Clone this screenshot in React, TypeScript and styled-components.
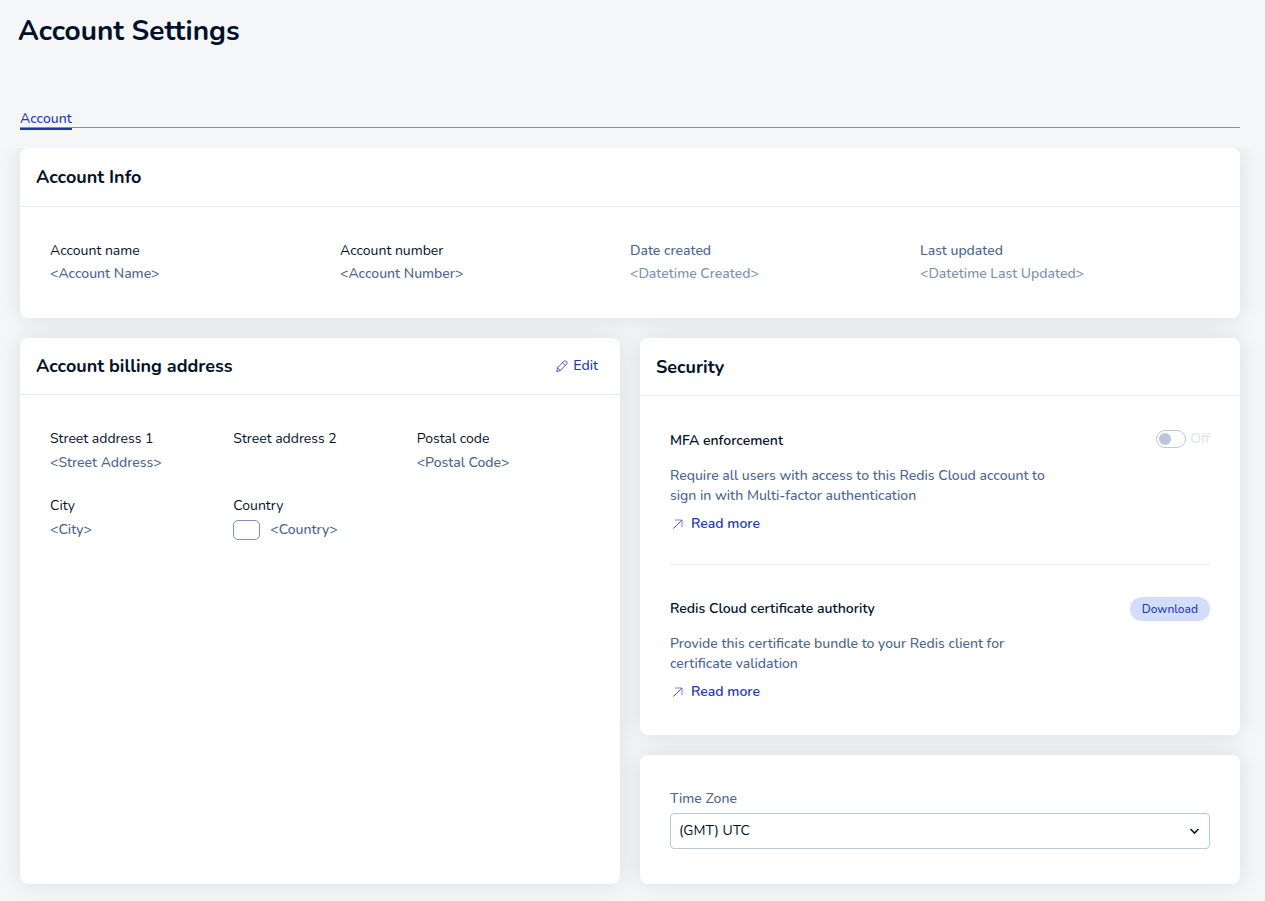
import React from 'react';
import styled, { createGlobalStyle } from 'styled-components';

const color = {
  page: '#f4f6f8',
  ink: '#091a33',
  title: '#01112a',
  slate: '#4a6590',
  faded: '#7b90b0',
  link: '#1e39b0',
  border: '#bbc6d8',
  line: '#e8ebf1',
};

const GlobalStyle = createGlobalStyle`
  *, *::before, *::after { box-sizing: border-box; }
  body {
    margin: 0;
    background: ${color.page};
    color: ${color.title};
    font: 400 14px/20px Nunito, 'Nunito Sans', Lato, 'Open Sans', sans-serif;
  }
  h1, h2, h3, p, dl, dd { margin: 0; }
  button, select, input { font: inherit; }
`;

const PageHeader = styled.header`
  padding: 10px 18px 57px;
`;

const PageTitle = styled.h1`
  font-size: 28px;
  line-height: 42px;
  font-weight: 700;
`;

const Tabs = styled.nav`
  display: flex;
  height: 19px;
  margin: 0 25px 0 20px;
  border-bottom: 1px solid ${color.faded};
`;

const Tab = styled.a`
  height: 21px;
  border-bottom: 2px solid ${color.link};
  color: ${color.link};
  font-weight: 500;
  text-decoration: none;
`;

const Content = styled.main`
  display: grid;
  gap: 20px;
  margin-top: 20px;
  padding: 0 25px 17px 20px;
  overflow: hidden;
`;

const Columns = styled.div`
  display: grid;
  grid-template-columns: repeat(2, minmax(0, 1fr));
  gap: 20px;
`;

const Stack = styled.div`
  display: flex;
  flex-direction: column;
  gap: 20px;
`;

const Card = styled.section`
  border-radius: 8px;
  background: #fff;
  box-shadow: 0 0 24px rgba(0, 0, 0, 0.1);
`;

const CardHeader = styled.div<{ $height: number }>`
  display: flex;
  align-items: center;
  justify-content: space-between;
  height: ${(p) => p.$height}px;
  padding: 0 22px 0 16px;
  border-bottom: 1px solid ${color.line};
`;

const CardTitle = styled.h2`
  font-size: 18px;
  line-height: 24px;
  font-weight: 700;
`;

const EditButton = styled.button`
  display: flex;
  align-items: center;
  gap: 5px;
  padding: 0;
  border: 0;
  background: none;
  color: ${color.link};
  font-weight: 500;
`;

const Fields = styled.dl<{ $columns: number; $gap: number }>`
  display: grid;
  grid-template-columns: repeat(${(p) => p.$columns}, minmax(0, 1fr));
  gap: 23px ${(p) => p.$gap}px;
  padding: 34px 30px;
`;

const Field = styled.div<{ $gap: number }>`
  display: grid;
  gap: ${(p) => p.$gap}px;
  align-content: start;
`;

const Label = styled.dt<{ $muted?: boolean }>`
  color: ${(p) => (p.$muted ? color.slate : color.title)};
  font-weight: ${(p) => (p.$muted ? 500 : 400)};
`;

const Value = styled.dd<{ $muted?: boolean }>`
  display: flex;
  align-items: center;
  gap: 10px;
  color: ${(p) => (p.$muted ? color.faded : color.slate)};
  font-weight: 500;
`;

const Flag = styled.span`
  width: 27px;
  height: 20px;
  border: 1px solid ${color.faded};
  border-radius: 5px;
`;

const SecurityBody = styled.div`
  padding: 0 30px;
`;

const Setting = styled.section`
  padding: 33px 0 30px;

  & + & {
    border-top: 1px solid ${color.line};
    padding: 32px 0 33px;
  }
`;

const SettingHead = styled.div`
  display: flex;
  align-items: center;
  justify-content: space-between;
  height: 24px;
  margin-bottom: 13px;
`;

const SettingTitle = styled.h3`
  font-size: 14px;
  line-height: 20px;
  font-weight: 600;
`;

const SettingText = styled.p`
  max-width: 380px;
  color: ${color.slate};
  font-weight: 500;
`;

const ReadMore = styled.a`
  display: flex;
  align-items: center;
  width: max-content;
  gap: 8px;
  margin-top: 8px;
  padding-left: 3px;
  color: ${color.link};
  font-weight: 600;
  text-decoration: none;
`;

const Toggle = styled.label`
  display: flex;
  align-items: center;
  gap: 4px;
  padding-bottom: 4px;
  color: #dde3ec;
`;

const Switch = styled.input`
  appearance: none;
  display: flex;
  align-items: center;
  width: 30px;
  height: 18px;
  margin: 0;
  padding: 0 2px;
  border: 1px solid ${color.border};
  border-radius: 9px;
  background: #fff;

  &::before {
    content: '';
    width: 12px;
    height: 12px;
    border-radius: 50%;
    background: ${color.border};
  }

  &:checked {
    justify-content: flex-end;
  }
`;

const DownloadButton = styled.button`
  height: 24px;
  padding: 0 12px;
  border: 0;
  border-radius: 12px;
  background: #d2ddfc;
  color: ${color.link};
  font-size: 12px;
  line-height: 24px;
  font-weight: 500;
`;

const TimeZoneField = styled.div`
  display: grid;
  gap: 4px;
  padding: 34px 30px 35px;
`;

const TimeZoneLabel = styled.label`
  color: ${color.slate};
  font-weight: 500;
`;

const SelectBox = styled.div`
  display: grid;
  align-items: center;

  & > * { grid-area: 1 / 1; }
  & > svg {
    justify-self: end;
    margin-right: 10px;
    pointer-events: none;
  }
`;

const Select = styled.select`
  appearance: none;
  width: 100%;
  height: 36px;
  padding: 0 30px 0 8px;
  border: 1px solid ${color.border};
  border-radius: 4px;
  background: #fff;
  color: ${color.title};
`;

const PencilIcon = () => (
  <svg width="12" height="12" viewBox="0 0 12 12" fill="none" stroke="currentColor" strokeWidth="0.8" strokeLinejoin="round" strokeLinecap="round" aria-hidden="true">
    <path d="M0.8 11.2 L1.5 7.9 L7.7 1.4 Q8.9 0.2 10.3 1.4 Q11.8 2.8 10.6 4.2 L4.2 10.4 Z" />
    <path d="M6.5 2.7 L9.3 5.5 M1.5 7.9 L4.2 10.4" />
  </svg>
);

const ArrowIcon = () => (
  <svg width="10" height="10" viewBox="0 0 10 10" fill="none" stroke="currentColor" aria-hidden="true">
    <path d="M0.5 9.5 L9 1" strokeWidth="0.8" />
    <path d="M2 1 H9 V8" strokeWidth="1" strokeOpacity="0.6" />
  </svg>
);

const ChevronIcon = () => (
  <svg width="11" height="8" viewBox="0 0 11 8" fill="none" stroke={color.ink} strokeWidth="1.6" aria-hidden="true">
    <path d="M1.5 2 L5.5 6 L9.5 2" />
  </svg>
);

type FieldData = { label: string; value?: string; muted?: boolean; flag?: boolean };

const accountFields: FieldData[] = [
  { label: 'Account name', value: '<Account Name>' },
  { label: 'Account number', value: '<Account Number>' },
  { label: 'Date created', value: '<Datetime Created>', muted: true },
  { label: 'Last updated', value: '<Datetime Last Updated>', muted: true },
];

const addressFields: FieldData[] = [
  { label: 'Street address 1', value: '<Street Address>' },
  { label: 'Street address 2' },
  { label: 'Postal code', value: '<Postal Code>' },
  { label: 'City', value: '<City>' },
  { label: 'Country', value: '<Country>', flag: true },
];

type FieldListProps = { fields: FieldData[]; columns: number; columnGap: number; labelGap: number };

const FieldList = ({ fields, columns, columnGap, labelGap }: FieldListProps) => (
  <Fields $columns={columns} $gap={columnGap}>
    {fields.map((f) => (
      <Field key={f.label} $gap={labelGap}>
        <Label $muted={f.muted}>{f.label}</Label>
        <Value $muted={f.muted}>
          {f.flag && <Flag />}
          {f.value}
        </Value>
      </Field>
    ))}
  </Fields>
);

export default function App() {
  return (
    <>
      <GlobalStyle />
      <PageHeader>
        <PageTitle>Account Settings</PageTitle>
      </PageHeader>
      <Tabs>
        <Tab href="#account" aria-current="page">Account</Tab>
      </Tabs>
      <Content id="account">
        <Card>
          <CardHeader $height={59}>
            <CardTitle>Account Info</CardTitle>
          </CardHeader>
          <FieldList fields={accountFields} columns={4} columnGap={0} labelGap={3} />
        </Card>
        <Columns>
          <Card>
            <CardHeader $height={57}>
              <CardTitle>Account billing address</CardTitle>
              <EditButton type="button">
                <PencilIcon />
                Edit
              </EditButton>
            </CardHeader>
            <FieldList fields={addressFields} columns={3} columnGap={10} labelGap={4} />
          </Card>
          <Stack>
            <Card>
              <CardHeader $height={58}>
                <CardTitle>Security</CardTitle>
              </CardHeader>
              <SecurityBody>
                <Setting>
                  <SettingHead>
                    <SettingTitle>MFA enforcement</SettingTitle>
                    <Toggle>
                      <Switch type="checkbox" role="switch" disabled />
                      Off
                    </Toggle>
                  </SettingHead>
                  <SettingText>
                    Require all users with access to this Redis Cloud account to sign in with Multi-factor authentication
                  </SettingText>
                  <ReadMore href="#mfa">
                    <ArrowIcon />
                    Read more
                  </ReadMore>
                </Setting>
                <Setting>
                  <SettingHead>
                    <SettingTitle>Redis Cloud certificate authority</SettingTitle>
                    <DownloadButton type="button">Download</DownloadButton>
                  </SettingHead>
                  <SettingText>
                    Provide this certificate bundle to your Redis client for certificate validation
                  </SettingText>
                  <ReadMore href="#certificate">
                    <ArrowIcon />
                    Read more
                  </ReadMore>
                </Setting>
              </SecurityBody>
            </Card>
            <Card>
              <TimeZoneField>
                <TimeZoneLabel htmlFor="time-zone">Time Zone</TimeZoneLabel>
                <SelectBox>
                  <Select id="time-zone" defaultValue="utc">
                    <option value="utc">(GMT) UTC</option>
                  </Select>
                  <ChevronIcon />
                </SelectBox>
              </TimeZoneField>
            </Card>
          </Stack>
        </Columns>
      </Content>
    </>
  );
}
